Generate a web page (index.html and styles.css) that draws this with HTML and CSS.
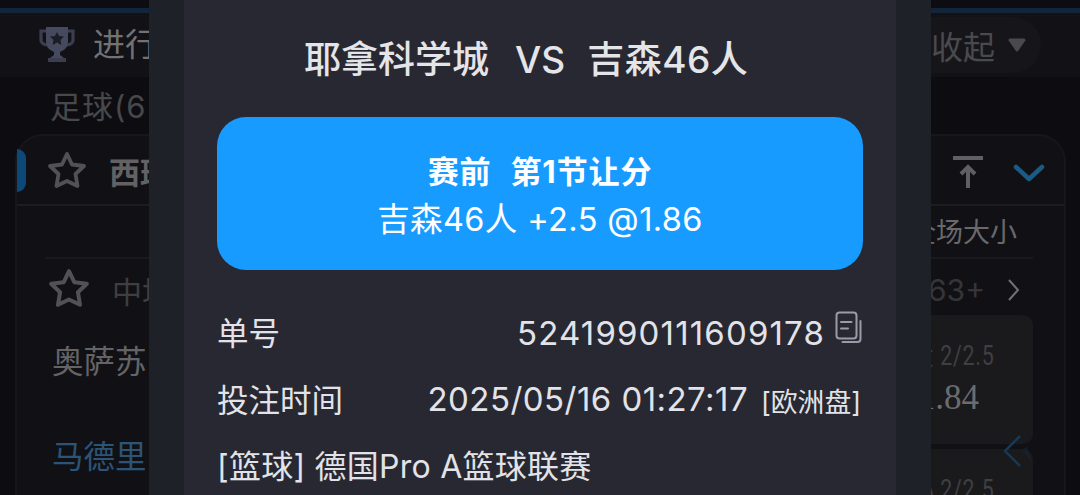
FILE: index.html
```html
<!DOCTYPE html>
<html lang="zh-CN">
<head>
  <meta charset="UTF-8">
  <meta name="viewport" content="width=device-width, initial-scale=1.0">
  <title>注单详情</title>
  <link rel="stylesheet" href="styles.css">
</head>
<body>
  <!-- Match list -->
  <div class="page">
    <div class="top-bar">
      <div class="top-left">
        <svg class="trophy" width="38" height="38" viewBox="0 0 38 38">
          <path d="M9 5H3v9q0 4 6 5M29 5h6v9q0 4-6 5" fill="none" stroke="#3b3e50" stroke-width="3.2"/>
          <path d="M8 1h22v15q0 7-8 10v3l4 3v4H12v-4l4-3v-3q-8-3-8-10z" fill="#464a5e"/>
          <path d="M10 32h18v4H10z" fill="#3b3e50"/>
          <path d="M19 6l2 4 5 .6-3.500 3.300.9 5-4.400-2.500-4.400 2.500.9-5L12 10.600l5-.6z" fill="#1b1d27"/>
        </svg>
        <span class="top-title">进行</span>
      </div>
      <div class="fold-btn">
        <span>收起</span>
        <svg width="20" height="15" viewBox="0 0 20 15"><path d="M3 2h14L10 12z" fill="#4a4a4e" stroke="#4a4a4e" stroke-width="3" stroke-linejoin="round"/></svg>
      </div>
    </div>
    <div class="sport-name">足球(6</div>

    <div class="league-card">
      <div class="league-head">
        <span class="marker"></span>
        <svg class="star" width="40" height="38" viewBox="0 0 40 38"><path d="M20 3l5 10.500 12 1.500-8.500 8 2 12L20 30 9.500 35l2-12L3 15l12-1.500z"/></svg>
        <span class="league-name">西班</span>
        <svg class="to-top" width="30" height="34" viewBox="0 0 30 34"><path d="M0 3h30M15 33V13M8 19l7-7 7 7"/></svg>
        <svg class="chevron" width="32" height="20" viewBox="0 0 32 20"><path d="M3 4l13 12L29 4"/></svg>
      </div>
      <div class="market-head">全场大小</div>
      <div class="match-info">
        <svg class="star match-star" width="42" height="40" viewBox="0 0 40 38"><path d="M20 3l5 10.500 12 1.500-8.500 8 2 12L20 30 9.500 35l2-12L3 15l12-1.500z"/></svg>
        <span class="match-time">中场</span>
        <span class="more">63+</span>
        <svg width="14" height="24" viewBox="0 0 14 24"><path d="M2 2l9 10-9 10" fill="none" stroke="#717175" stroke-width="2"/></svg>
      </div>
      <div class="match-body">
        <div class="teams">
          <div class="team">奥萨苏</div>
          <div class="team away">马德里</div>
        </div>
        <div class="odds-list">
          <div class="odds"><span class="line">大 2/2.5</span><span class="price">1.84</span></div>
          <div class="odds"><span class="line">小 2/2.5</span></div>
          <svg class="slide-hint" width="32" height="34" viewBox="0 0 32 34"><path d="M18 2L3 17l15 15" fill="none" stroke="#173a59" stroke-width="2.400"/><path d="M20 17l5-5 5 16z" fill="#182637" opacity=".5"/></svg>
        </div>
      </div>
    </div>
  </div>

  <!-- Bet detail popup -->
  <div class="modal">
    <div class="modal-content">
      <div class="versus">
        <span class="home">耶拿科学城</span>
        <span class="vs">VS</span>
        <span class="guest">吉森46人</span>
      </div>
      <div class="bet-box">
        <div class="bet-type"><span>赛前</span><span>第1节让分</span></div>
        <div class="bet-pick">吉森46人 +2.5 @1.86</div>
      </div>
      <div class="row">
        <span class="label">单号</span>
        <div class="value">
          <span class="order-no">5241990111609178</span>
          <svg class="copy" width="27" height="33" viewBox="0 0 27 33">
            <rect x="1.500" y="1.500" width="20" height="26" rx="3"/>
            <path d="M6 11h10.500M6 17.500h7M25.500 10v18q0 3-3 3H7.500"/>
          </svg>
        </div>
      </div>
      <div class="row">
        <span class="label">投注时间</span>
        <div class="value">
          <span class="time">2025/05/16 01:27:17</span>
          <span class="plate">[欧洲盘]</span>
        </div>
      </div>
      <div class="row">
        <span class="league">[篮球] 德国Pro A篮球联赛</span>
      </div>
    </div>
  </div>
</body>
</html>
```

FILE: styles.css
```css
* {
  box-sizing: border-box;
}

body {
  margin: 0;
  height: 495px;
  overflow: hidden;
  background-color: #0d0d11;
  font-family: Inter, "Noto Sans CJK SC", sans-serif;
  white-space: nowrap;
}

svg {
  display: block;
  flex: none;
}

/* Match list */
.page {
  height: 495px;
  padding-top: 8px;
  overflow: hidden;
}

.top-bar {
  height: 69px;
  border-top: 5px solid #12253a;
  background-color: #121216;
  display: flex;
  justify-content: space-between;
  align-items: center;
  padding: 0 39px 0 38px;
}

.top-left {
  display: flex;
  align-items: center;
  gap: 17px;
}

.top-title {
  font-size: 32px;
  line-height: 40px;
  color: #727275;
}

.fold-btn {
  width: 140px;
  height: 56px;
  border-radius: 28px;
  background-color: #16161a;
  display: flex;
  justify-content: flex-end;
  align-items: center;
  gap: 12px;
  padding-right: 14px;
  font-size: 32px;
  color: #4a4a4e;
}

.sport-name {
  height: 57px;
  padding: 10px 0 0 50px;
  font-size: 31px;
  line-height: 40px;
  letter-spacing: 1px;
  color: #48484b;
}

.league-card {
  height: 400px;
  margin: 0 14px 0 15px;
  border: 2px solid #17171b;
  border-radius: 28px;
  background-color: #111115;
}

.league-head {
  height: 70px;
  border-bottom: 2px solid #1d1d21;
  display: flex;
  align-items: center;
  padding-right: 19px;
}

.marker {
  width: 9px;
  height: 43px;
  border-radius: 0 9px 9px 0;
  background-color: #0c4878;
}

.star {
  margin-left: 21px;
  fill: none;
  stroke: #525255;
  stroke-width: 3.8;
  stroke-linejoin: round;
}

.match-star {
  margin: -5px 0 0 23px;
}

.league-name {
  margin-left: 22px;
  font-size: 31px;
  font-weight: bold;
  color: #626265;
}

.to-top {
  margin: 4px 0 0 auto;
  fill: none;
  stroke: #5f5f65;
  stroke-width: 4;
}

.chevron {
  margin: 5px 0 0 30px;
  fill: none;
  stroke: #195b85;
  stroke-width: 4.5;
  stroke-linecap: round;
  stroke-linejoin: round;
}

.market-head {
  height: 53px;
  margin: 0 31px 0 28px;
  padding-right: 16px;
  border-bottom: 2px solid #1a1a1e;
  font-size: 27px;
  line-height: 54px;
  text-align: right;
  color: #69696c;
}

.match-info {
  height: 56px;
  display: flex;
  align-items: center;
  padding: 6px 43px 0 8px;
}

.match-time {
  margin-left: 22px;
  font-size: 30px;
  color: #3f3f42;
}

.more {
  margin-left: auto;
  margin-right: 22px;
  font-size: 30px;
  color: #353539;
}

.match-body {
  display: flex;
  justify-content: space-between;
  padding: 0 31px 0 35px;
}

.team {
  height: 95px;
  padding-top: 27px;
  font-size: 31.5px;
  line-height: 40px;
  color: #646467;
}

.team.away {
  color: #2b5477;
}

.odds-list {
  position: relative;
  width: 200px;
}

.odds {
  height: 129px;
  margin-bottom: 5px;
  border-radius: 10px;
  background-color: #1a1a1d;
  display: flex;
  flex-direction: column;
  align-items: flex-end;
  padding: 23px 39px 0 0;
}

.line {
  font-family: Roboto, "Noto Sans CJK SC", sans-serif;
  font-size: 27px;
  line-height: 36px;
  letter-spacing: 1px;
  transform: scaleX(0.79);
  transform-origin: right;
  color: #3f3f42;
}

.price {
  margin-right: 15px;
  font-family: "Liberation Serif", serif;
  font-size: 35px;
  line-height: 48px;
  color: #6c6c6f;
}

.slide-hint {
  position: absolute;
  right: -1px;
  top: 119px;
}

/* Bet detail popup */
.modal {
  position: absolute;
  left: 149px;
  top: 0;
  width: 782px;
  height: 495px;
  overflow: hidden;
  padding: 0 35px;
  background-color: #1f2129;
}

.modal-content {
  height: 495px;
  padding: 36px 33px 0;
  background-color: #282832;
  color: #e2e3e8;
}

.versus {
  height: 81px;
  display: flex;
  padding-left: 87px;
  font-size: 37px;
  font-weight: 500;
  line-height: 48px;
  color: #e4e5e9;
}

.vs {
  margin: 0 22px 0 26px;
}

.guest {
  letter-spacing: 0.5px;
}

.bet-box {
  height: 153px;
  border-radius: 29px;
  background-color: #189bff;
  color: #fff;
  text-align: center;
  padding-top: 32px;
}

.bet-type {
  display: flex;
  justify-content: center;
  gap: 19px;
  font-size: 31px;
  font-weight: bold;
  line-height: 46px;
  letter-spacing: 0.9px;
}

.bet-pick {
  font-size: 32.5px;
  line-height: 50px;
  letter-spacing: 0.4px;
}

.bet-box + .row {
  margin-top: 28px;
}

.row {
  height: 67px;
  display: flex;
  justify-content: space-between;
  align-items: center;
  font-size: 31.5px;
}

.value {
  display: flex;
  align-items: center;
}

.label {
  margin-top: -2px;
}

.order-no,
.time {
  font-size: 33px;
}

.order-no {
  margin-top: 2px;
  letter-spacing: 1.15px;
}

.time {
  letter-spacing: 0.45px;
}

.copy {
  margin: -8px 1px 0 10px;
  fill: none;
  stroke: #9a9ba9;
  stroke-width: 2;
  stroke-linecap: round;
}

.plate {
  margin: 4px 2px 0 13px;
  font-size: 26.8px;
}

.league {
  margin-top: -4px;
  font-size: 32px;
  letter-spacing: 0.25px;
}
```
